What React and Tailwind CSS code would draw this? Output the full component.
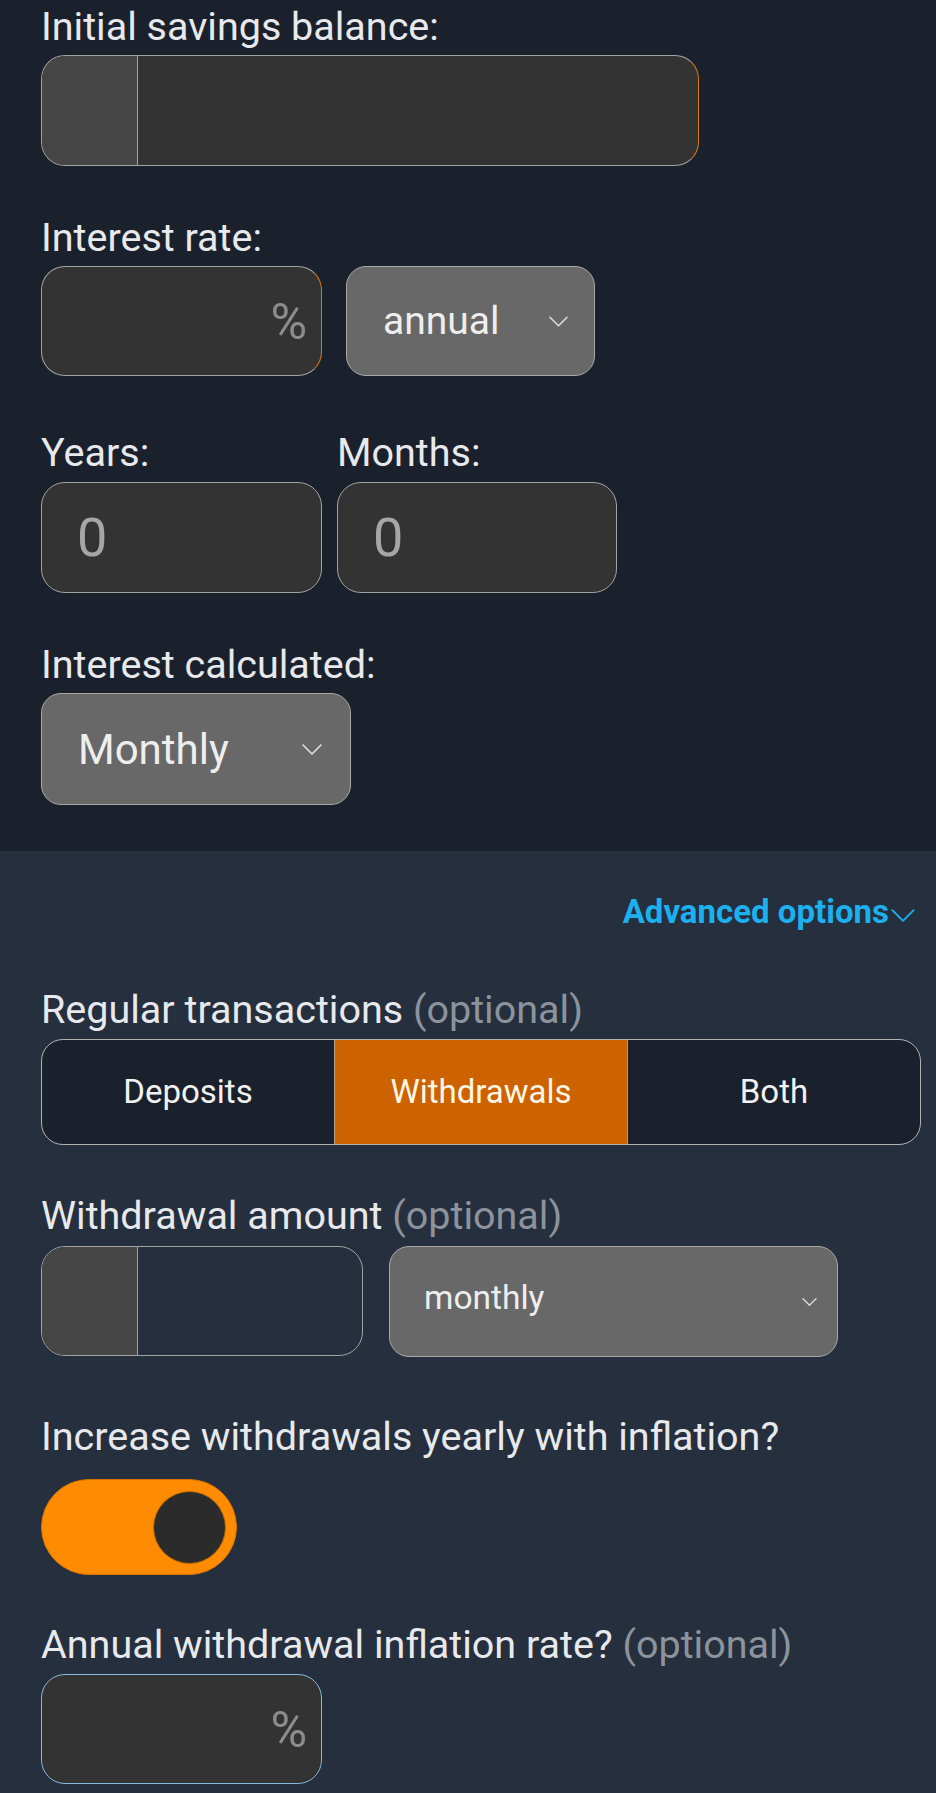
import React from "react";

function Chevron({ className }) {
  return (
    <svg className={className} viewBox="0 0 20 11" fill="none">
      <polyline points="1,1 10,10 19,1" stroke="currentColor" strokeWidth="1.6" strokeLinecap="round" strokeLinejoin="round" />
    </svg>
  );
}

function Label({ children, optional }) {
  return (
    <div className="text-[39.5px] leading-[46px] text-[#e8e9ec] whitespace-nowrap">
      {children}
      {optional && <span className="text-[#8d939c]"> (optional)</span>}
    </div>
  );
}

export default function App() {
  return (
    <div className="w-[936px] min-h-[1793px] font-['Roboto',sans-serif] bg-[#252f3e]">
      {/* Top section */}
      <div className="bg-[#1b212c] pl-[41px] pt-[4px] pb-[46px] flex flex-col">
        <Label>Initial savings balance:</Label>
        <div className="mt-[5px] w-[658px] h-[111px] flex rounded-[24px] border-[1.5px] border-[#a3a3a3] border-r-[#d9780f] overflow-hidden bg-[#333333]">
          <div className="w-[96px] h-full bg-[#464646] border-r-[1.5px] border-[#a3a3a3]" />
          <div className="flex-1" />
        </div>

        <div className="mt-[49px]">
          <Label>Interest rate:</Label>
        </div>
        <div className="mt-[5px] flex gap-[24px]">
          <div className="w-[281px] h-[110px] rounded-[24px] border-[1.5px] border-[#a3a3a3] border-r-[#d9780f] bg-[#333333] flex items-center justify-end pr-[14px]">
            <span className="text-[50px] leading-none text-[#8c8c8c] mt-[2px]">%</span>
          </div>
          <div className="w-[249px] h-[110px] rounded-[20px] border-[1.5px] border-[#a8a8a8] bg-[#686868] flex items-center justify-between pl-[36px] pr-[26px]">
            <span className="text-[39px] text-[#eeeeee]">annual</span>
            <Chevron className="w-[19px] h-[11px] text-[#e0e0e0]" />
          </div>
        </div>

        <div className="mt-[54px] flex gap-[15px]">
          <div className="w-[281px] flex flex-col">
            <Label>Years:</Label>
            <div className="mt-[6px] h-[111px] rounded-[24px] border-[1.5px] border-[#a3a3a3] bg-[#333333] flex items-center pl-[35px]">
              <span className="text-[54px] leading-none text-[#a6a6a6]">0</span>
            </div>
          </div>
          <div className="w-[280px] flex flex-col">
            <Label>Months:</Label>
            <div className="mt-[6px] h-[111px] rounded-[24px] border-[1.5px] border-[#a3a3a3] bg-[#333333] flex items-center pl-[35px]">
              <span className="text-[54px] leading-none text-[#a6a6a6]">0</span>
            </div>
          </div>
        </div>

        <div className="mt-[49px]">
          <Label>Interest calculated:</Label>
        </div>
        <div className="mt-[5px] w-[310px] h-[112px] rounded-[20px] border-[1.5px] border-[#a8a8a8] bg-[#686868] flex items-center justify-between pl-[36px] pr-[28px]">
          <span className="text-[42px] text-[#eeeeee]">Monthly</span>
          <Chevron className="w-[20px] h-[11px] text-[#e0e0e0]" />
        </div>
      </div>

      {/* Advanced section */}
      <div className="bg-[#252f3e] pl-[41px] pb-[10px] flex flex-col">
        <div className="mt-[42px] pr-[19px] flex justify-end items-center">
          <span className="text-[33px] leading-[38px] font-bold text-[#1cb0ef]">Advanced options</span>
          <Chevron className="w-[28px] h-[13px] text-[#1cb0ef] mt-[6px]" />
        </div>

        <div className="mt-[56px]">
          <Label optional>Regular transactions</Label>
        </div>
        <div className="mt-[6px] w-[880px] h-[106px] flex rounded-[22px] border-[1.5px] border-[#b3b3b3] overflow-hidden bg-[#1b212c]">
          <div className="flex-1 flex items-center justify-center text-[33px] text-[#f2f2f2]">Deposits</div>
          <div className="flex-1 flex items-center justify-center text-[33px] text-[#fff6e6] bg-[#cc6300] border-x-[1.5px] border-[#b3a08a]">Withdrawals</div>
          <div className="flex-1 flex items-center justify-center text-[33px] text-[#f2f2f2]">Both</div>
        </div>

        <div className="mt-[48px]">
          <Label optional>Withdrawal amount</Label>
        </div>
        <div className="mt-[7px] flex gap-[26px]">
          <div className="w-[322px] h-[110px] flex rounded-[24px] border-[1.5px] border-[#a3a3a3] overflow-hidden">
            <div className="w-[96px] h-full bg-[#464646] border-r-[1.5px] border-[#a3a3a3]" />
            <div className="flex-1" />
          </div>
          <div className="w-[449px] h-[111px] rounded-[20px] border-[1.5px] border-[#a8a8a8] bg-[#686868] flex items-center justify-between pl-[34px] pr-[20px]">
            <span className="text-[33.5px] text-[#eeeeee] -mt-[6px]">monthly</span>
            <Chevron className="w-[15px] h-[8px] text-[#e0e0e0]" />
          </div>
        </div>

        <div className="mt-[57px]">
          <Label>Increase withdrawals yearly with inflation?</Label>
        </div>
        <div className="mt-[19px] w-[196px] h-[96px] rounded-full bg-[#ff8c00] border-[1.5px] border-[#d87400] flex items-center justify-end pr-[10px]">
          <div className="w-[73px] h-[73px] rounded-full bg-[#2b2b2b] border-[1.5px] border-[#c26a00]" />
        </div>

        <div className="mt-[47px]">
          <Label optional>Annual withdrawal inflation rate?</Label>
        </div>
        <div className="mt-[6px] w-[281px] h-[110px] rounded-[24px] border-[1.5px] border-[#86b9db] bg-[#333333] flex items-center justify-end pr-[14px]">
          <span className="text-[50px] leading-none text-[#8c8c8c] mt-[2px]">%</span>
        </div>
      </div>
    </div>
  );
}
